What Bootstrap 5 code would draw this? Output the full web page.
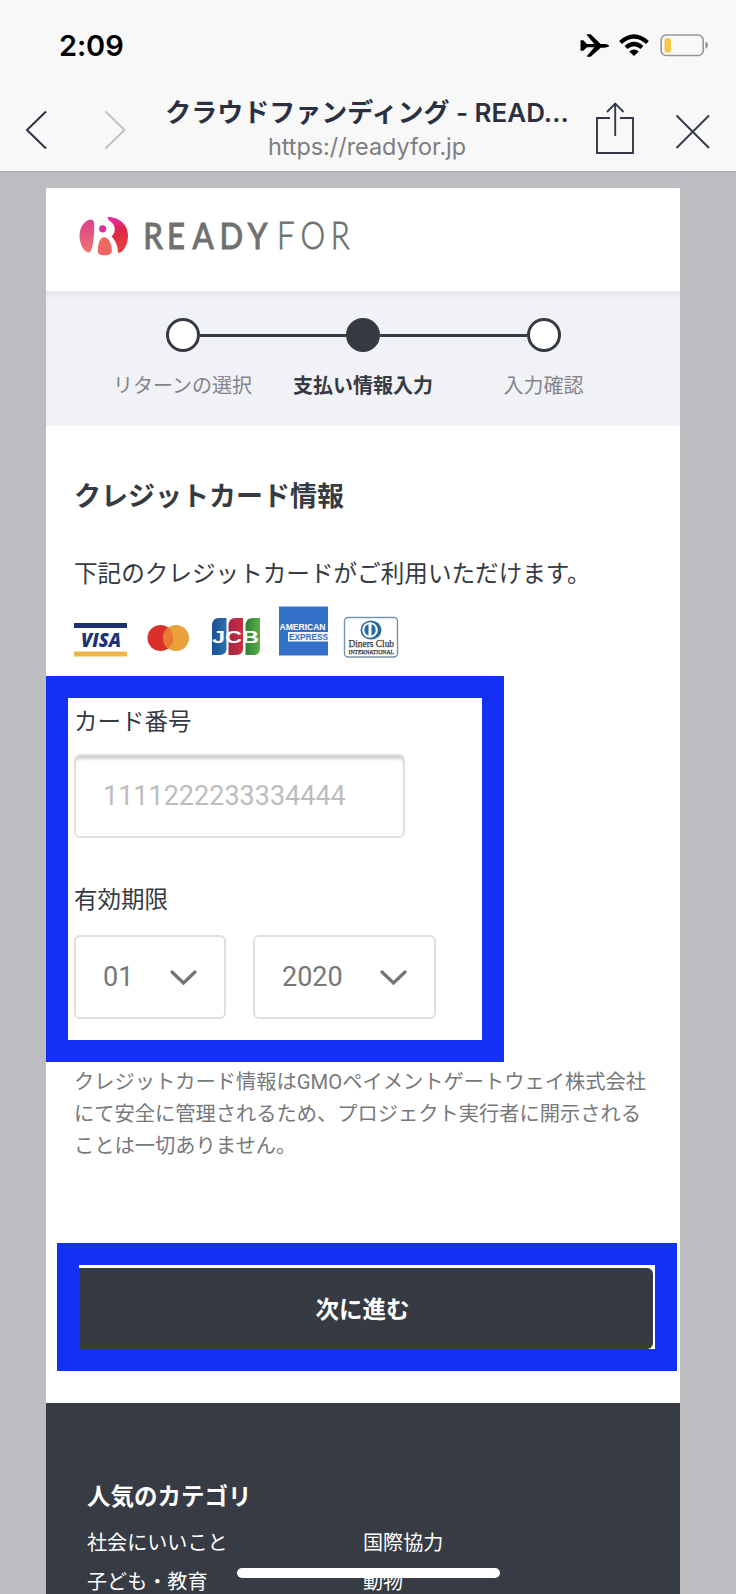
<!DOCTYPE html>
<html lang="ja">
<head>
<meta charset="utf-8">
<meta name="viewport" content="width=device-width, initial-scale=1">
<title>クラウドファンディング - READYFOR</title>
<link href="https://cdn.jsdelivr.net/npm/bootstrap@5.3.0/dist/css/bootstrap.min.css" rel="stylesheet">
<style>
:root{--ink:#363a42;--blue:#1430f5;--muted-ink:#76777a}
html,body{height:1594px;overflow:hidden}
body{font-family:Roboto,"Noto Sans CJK JP",sans-serif;color:var(--ink);background:#bdbcc1}
svg{display:block;flex:none}
.phone{width:736px;height:1594px}
.topbar{height:172px;background:#f8f8f8;border-bottom:1px solid #aaa9ad;font-family:Inter,"Noto Sans CJK JP",sans-serif}
.statusbar{height:90px;padding:0 27px 0 59px}
.clock{font-size:29px;font-weight:600;color:#000;line-height:90px;letter-spacing:-.1px;padding-top:1px}
.browserbar{height:81px;padding:0 25px}
.page-name{width:410px;text-align:center}
.page-title{font-size:26px;font-weight:600;line-height:32px;color:#2b3040;padding-top:7px;margin:0 -6px}
.page-url{font-size:23.4px;line-height:30px;color:#7d7d82;padding-top:3px}
.sheet{width:634px;height:1406px;margin:16px 0 0 46px;overflow:hidden}
.brand{height:103px;padding:18px 0 0 32px}
.steps{height:135px;background:linear-gradient(#e5e6ea,#f1f2f6 9px);padding-top:27px}
.step{width:180.5px;font-size:20px;line-height:30px;color:#84858a;white-space:nowrap}
.step .dot{width:34px;height:34px;border:3.5px solid var(--ink);border-radius:50%;background:#fff}
.step .rail{height:3px;background:var(--ink)}
.step.now{color:var(--ink);font-weight:700}
.step.now .dot{background:var(--ink)}
.step-label{margin-top:19px}
.intro{height:250px;padding:51px 0 0 28px}
.intro h1{font-size:27px;font-weight:700;line-height:40px;margin:0}
.intro p{font-size:23.6px;line-height:36px;margin:39px 0 0;white-space:nowrap}
.brands{margin-top:14px}
.card-fields{width:457.5px;height:386px;border:22px solid var(--blue);padding:6px 0 0 6px}
.field-label{font-size:23.5px;line-height:36px;display:block}
.field{height:84px;border:2px solid #e0e0e1;border-radius:6px;font-size:27px;color:var(--muted-ink);background:#fff;padding:0 27px}
.number-field{width:331px;margin-top:14px;box-shadow:inset 0 4px 3px -1px #cfcfd0}
.number-field::placeholder{color:#bdbdbf;opacity:1}
.number-field:focus{outline:0}
.expiry-label{margin-top:44px}
.month-field{width:151.5px;margin-top:17px}
.year-field{width:182.5px;margin:17px 0 0 27.5px}
.secure-note{font-size:20.25px;line-height:32px;color:#77787b;margin:4px 0 0 28px;height:177px;width:590px;white-space:nowrap}
.submit-frame{width:620px;height:127.5px;margin-left:11px;border:22px solid var(--blue);padding-top:3px;overflow:hidden}
.submit{width:574px;height:81px;background:var(--ink);color:#fff;font-size:23.5px;font-weight:700;border-radius:0 6px 6px 0;padding:5px 7px 0 0}
.site-footer{margin-top:32.5px;height:191px;background:#373b43;color:#fff;padding:76px 0 0 41px}
.site-footer h2{font-size:23.5px;font-weight:700;line-height:36px;margin:0}
.site-footer a{width:276px;font-size:20.1px;line-height:39px;color:#fff;text-decoration:none}
.links{margin-top:9px}
.home-pill{width:263px;height:10px;left:237px;top:1568px;background:#fff}
</style>
</head>
<body>
<div class="phone position-relative overflow-hidden">
  <header class="topbar">
    <div class="statusbar d-flex justify-content-between align-items-center">
      <span class="clock">2:09</span>
      <svg width="130" height="30" viewBox="579 30 130 30">
        <path d="M581 39h3l4 4h8l-8-9.500v-1h4l11 10.500h4q5 .4 5 2t-5 2h-4l-11 10h-4v-1l8-9.500h-8l-4 4h-3v-12z" transform="translate(46 4.400) scale(.92)"/>
        <g fill="none" stroke="#000" stroke-width="4.200"><path d="M620.500 42.500q13.500-12 27 0"/><path d="M626 47.500q8-7 16 0"/></g>
        <path d="M629.200 51.500q4.800-4 9.600 0l-4.800 4.500z"/>
        <rect x="661.200" y="35" width="42" height="20.500" rx="5" fill="none" stroke="#969696" stroke-width="1.600"/>
        <rect x="664.500" y="38" width="6.500" height="14.500" rx="2.500" fill="#f4c84b"/>
        <path d="M705.500 41.500q2.500.8 2.500 3.500t-2.500 4z" fill="#8c8c8c"/>
      </svg>
    </div>
    <div class="browserbar d-flex">
      <svg width="137" height="80" viewBox="25 90 137 80" fill="none" stroke-width="2"><path d="M46 111.500 27 130l19 18.500" stroke="#2d3343"/><path d="M105.500 111.500 124.500 130l-19 18.500" stroke="#c3c3c5"/></svg>
      <div class="page-name">
        <div class="page-title text-nowrap">クラウドファンディング - READ...</div>
        <div class="page-url">https://readyfor.jp</div>
      </div>
      <svg width="139" height="80" viewBox="572 89.500 139 80" fill="none" stroke="#333949" stroke-width="1.900"><path d="M610 117.500h-13v35h36v-35h-13M615.200 135.500v-32M607 111.500l8.200-8.500 8.300 8.500"/><path d="m676.500 115 32.500 32.500M709 115l-32.500 32.500"/></svg>
    </div>
  </header>

  <main class="sheet bg-white">
    <div class="brand">
      <svg width="290" height="66" viewBox="77.500 206 290 66" role="img" aria-label="READYFOR">
        <defs>
          <linearGradient id="petal" x1="0" y1="0" x2="0" y2="1"><stop stop-color="#da4090"/><stop offset="1" stop-color="#ee766d"/></linearGradient>
          <linearGradient id="wing" x1="0" y1="0" x2=".25" y2="1"><stop stop-color="#e82cba"/><stop offset=".5" stop-color="#dd2845"/><stop offset="1" stop-color="#e43e3c"/></linearGradient>
        </defs>
        <path d="M90.500 219.500c3.600 0 3.600 5 3 14-.8 12-2.500 19-5.300 19-5 0-9.200-9-9.200-17s5-15.500 11.500-16z" fill="url(#petal)"/>
        <circle cx="102.200" cy="228.800" r="3.600" fill="#d9329a"/>
        <path d="M103.500 237.300c5 0 7.700 7 7.800 13 0 4-3 5-7 5-5 0-7-1-7-5 .2-6 2-13 6.200-13z" fill="#ee6861"/>
        <path d="M107 217c11 0 20.500 7 20.500 18.500 0 9-4.500 17.500-10 17.500 0-7-2.500-12.500-6.500-16.500 3.500-3 4.500-8 1.500-12.500-1.500-2.500-4.500-2.500-5.500-7z" fill="url(#wing)"/>
        <g transform="scale(.83 1)" font-family="Lato" font-size="37.500" fill="#6f706f"><text x="172 200.500 231.200 263.800 297.800" y="249.500" font-weight="500" stroke="#6f706f" stroke-width=".9">READY</text><text x="333 361.500 398" y="249.500" font-weight="300" stroke="#6f706f" stroke-width=".8">FOR</text></g>
      </svg>
    </div>

    <div class="steps d-flex justify-content-center">
      <div class="step d-flex flex-column align-items-center"><div class="d-flex align-items-center w-100"><div class="flex-fill"></div><div class="dot"></div><div class="rail flex-fill"></div></div><div class="step-label">リターンの選択</div></div>
      <div class="step now d-flex flex-column align-items-center"><div class="d-flex align-items-center w-100"><div class="rail flex-fill"></div><div class="dot"></div><div class="rail flex-fill"></div></div><div class="step-label">支払い情報入力</div></div>
      <div class="step d-flex flex-column align-items-center"><div class="d-flex align-items-center w-100"><div class="rail flex-fill"></div><div class="dot"></div><div class="flex-fill"></div></div><div class="step-label">入力確認</div></div>
    </div>

    <section class="intro">
      <h1>クレジットカード情報</h1>
      <p>下記のクレジットカードがご利用いただけます。</p>
      <svg class="brands" width="330" height="54" viewBox="74 606 330 54">
        <defs>
          <linearGradient id="jb"><stop stop-color="#1d4f96"/><stop offset="1" stop-color="#2d70ac"/></linearGradient>
          <linearGradient id="jr"><stop stop-color="#a52645"/><stop offset="1" stop-color="#c92f43"/></linearGradient>
          <linearGradient id="jg"><stop stop-color="#2d8237"/><stop offset="1" stop-color="#5baf46"/></linearGradient>
        </defs>
        <path d="M74 623h53v5H74z" fill="#1b2f72"/><path d="M74 651.500h53v5H74z" fill="#e9b848"/>
        <text x="81" y="646.500" textLength="40" lengthAdjust="spacingAndGlyphs" font-family="Open Sans" font-size="19" font-style="italic" font-weight="800" fill="#1b3478">VISA</text>
        <circle cx="160.500" cy="638" r="13" fill="#da302c"/><circle cx="176" cy="638" r="13" fill="#eaa03b"/><path d="M168.200 627.600a13 13 0 0 1 0 20.800 13 13 0 0 1 0-20.800z" fill="#e97931"/>
        <path d="M219 618h7.500v30.500q0 6.500-6.500 6.500h-8v-29q0-8 7-8z" fill="url(#jb)"/>
        <path d="M235.500 618h7.500v30.500q0 6.500-6.500 6.500h-8v-29q0-8 7-8z" fill="url(#jr)"/>
        <path d="M252.500 618h7.500v30.500q0 6.500-6.500 6.500h-8v-29q0-8 7-8z" fill="url(#jg)"/>
        <text x="212" y="642.500" textLength="47" lengthAdjust="spacingAndGlyphs" font-family="Liberation Sans" font-size="17" font-weight="700" fill="#fff">JCB</text>
        <path d="M279 606.500h49v49h-49z" fill="#3370c7"/>
        <text x="279.500" y="629.500" textLength="46" lengthAdjust="spacingAndGlyphs" font-family="Liberation Sans" font-weight="700" font-size="9.500" fill="#fff">AMERICAN</text>
        <path d="M288 632h40v9.500h-40z" fill="#f3f7fc"/>
        <text x="289" y="640.300" textLength="39" lengthAdjust="spacingAndGlyphs" font-family="Liberation Sans" font-size="9" font-weight="700" fill="#3370c7">EXPRESS</text>
        <rect x="344.500" y="617.500" width="53" height="39.500" rx="3.500" fill="#fff" stroke="#7894a9" stroke-width="1.400"/>
        <ellipse cx="371" cy="630" rx="10.500" ry="9.500" fill="#28699f"/><circle cx="370" cy="630" r="7.800" fill="#fff"/><path d="M368.500 624.300v11.400a6 6 0 0 1 0-11.400zM371.500 624.300v11.400a6 6 0 0 0 0-11.400z" fill="#28699f"/>
        <g font-family="Liberation Serif" fill="#30363f" stroke="#30363f" stroke-width=".25"><text x="348.500" y="647" textLength="45.500" lengthAdjust="spacingAndGlyphs" font-size="10.500">Diners Club</text><text x="348.500" y="653.500" textLength="45.500" lengthAdjust="spacingAndGlyphs" font-size="6">INTERNATIONAL</text></g>
      </svg>
    </section>

    <form class="card-fields">
      <label class="field-label" for="num">カード番号</label>
      <input id="num" class="field number-field d-block" placeholder="1111222233334444">
      <div class="field-label expiry-label">有効期限</div>
      <div class="d-flex">
        <div class="field month-field d-flex align-items-center justify-content-between"><span>01</span><svg width="28" height="18" viewBox="0 0 28 18" fill="none" stroke="#747577" stroke-width="3.200" stroke-linecap="round"><path d="m3 4 11.500 11L26 4"/></svg></div>
        <div class="field year-field d-flex align-items-center justify-content-between"><span>2020</span><svg width="28" height="18" viewBox="0 0 28 18" fill="none" stroke="#747577" stroke-width="3.200" stroke-linecap="round"><path d="m3 4 11.500 11L26 4"/></svg></div>
      </div>
    </form>

    <p class="secure-note">クレジットカード情報はGMOペイメントゲートウェイ株式会社<br>にて安全に管理されるため、プロジェクト実行者に開示される<br>ことは一切ありません。</p>

    <div class="submit-frame"><button type="button" class="submit border-0 d-block">次に進む</button></div>

    <footer class="site-footer">
      <h2>人気のカテゴリ</h2>
      <nav class="links d-flex flex-wrap"><a href="#">社会にいいこと</a><a href="#">国際協力</a><a href="#">子ども・教育</a><a href="#">動物</a></nav>
    </footer>
  </main>
  <div class="home-pill position-absolute rounded-pill"></div>
</div>
<script src="https://cdn.jsdelivr.net/npm/bootstrap@5.3.0/dist/js/bootstrap.bundle.min.js"></script>
</body>
</html>
